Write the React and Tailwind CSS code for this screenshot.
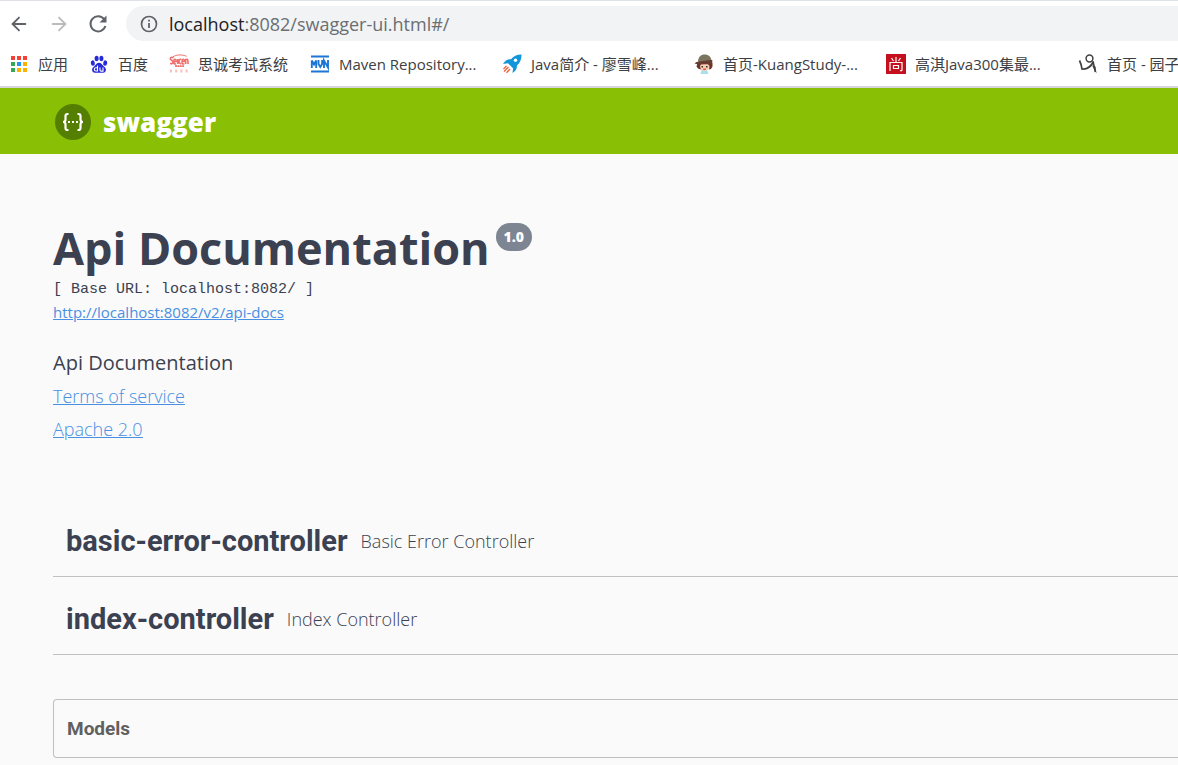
import { ArrowLeft, ArrowRight } from "lucide-react";

const AppsIcon = () => (
  <svg viewBox="0 0 18 18" className="h-[18px] w-[18px]">
    <path d="M1 1h4v4H1zM7 1h4v4H7zM13 1h4v4h-4z" fill="#f44336" />
    <path d="M1 7h4v4H1zM1 13h4v4H1z" fill="#34a853" />
    <path d="M7 7h4v4H7z" fill="#2196f3" />
    <path d="M13 7h4v4h-4zM7 13h4v4H7zM13 13h4v4h-4z" fill="#fbb300" />
  </svg>
);

const PawIcon = () => (
  <svg viewBox="0 0 20 20" className="h-5 w-5" fill="#2529d8">
    <ellipse cx="3.800" cy="9" rx="2" ry="2.700" transform="rotate(-12 4 9)" />
    <ellipse cx="7.600" cy="4.500" rx="2" ry="2.800" />
    <ellipse cx="12.400" cy="4.500" rx="2" ry="2.800" />
    <ellipse cx="16.200" cy="9" rx="2" ry="2.700" transform="rotate(12 16 9)" />
    <path d="M10 8.800c2.200 0 2.800 1.700 4.400 3.100 1.600 1.300 3 2.400 2.400 4.800-.5 2-2.600 2.300-6.800 2.100-4.200.2-6.300-.1-6.800-2.100-.6-2.400.8-3.500 2.400-4.800C7.200 10.500 7.800 8.800 10 8.800z" />
    <path
      d="M8.500 11.500v5.500H6.900a1.600 1.600 0 010-3.200h1.600M11 13.500v2.700q0 .9 1 .9h2v-3.600"
      fill="none"
      stroke="#fff"
      strokeWidth="1.100"
    />
  </svg>
);

const SiccenIcon = () => (
  <svg viewBox="0 0 20 20" className="h-5 w-5" fill="none" stroke="#f26f6b">
    <path d="M3.800 3C7 .5 13 .2 17.500 2.300" strokeWidth="1" />
    <path
      d="M4.500 4C2 2 0 4.800 2.300 6s2.700 4.200-1.300 3.500M4.800 7.500h2.400c0-3-2.400-3-2.400 0s1 2.800 2.400 2.200M8.800 5v5M12.200 5.500C9.500 4 9 10.500 12.200 9.500M13 7.500h2.400c0-3-2.400-3-2.400 0s1 2.800 2.400 2.200M16.700 10V5.500c2.500-1 2.300.5 2.300 4.500"
      strokeWidth="1.600"
    />
    <path d="M6 12.200h9" strokeWidth="1.800" strokeDasharray="2 .4" />
    <path d="M1 17h18" strokeWidth="3" strokeDasharray="2 3.200" opacity=".45" />
  </svg>
);

const MvnIcon = () => (
  <svg viewBox="0 0 20 20" className="h-5 w-5" fill="none" stroke="#1b76d8">
    <path d="M1 2.500h18M1 17.500h18" strokeWidth="2" />
    <path
      d="M1.800 14V6.500L4 10.500l2.200-4V14M8.500 6v4l1.800 3 1.800-3V6M14 14V6.500l4 7V6"
      strokeWidth="1.900"
    />
  </svg>
);

const RocketIcon = () => (
  <svg viewBox="0 0 20 20" className="h-5 w-5">
    <path
      d="M19.500.5c-5 0-8 1.500-10.500 4.800-3-.3-5.500.700-8 4.700l5-.8 5.200 5.200-.8 4.600c3.600-2 4.800-4.500 4.500-7.500C18 8.800 19.600 5.500 19.500.5z"
      fill="#1296db"
    />
    <circle cx="13.500" cy="6.300" r="1.700" fill="#fff" />
    <path
      d="M4.500 12L1.500 15M6.500 13L2 17.500M8 15l-3.500 3.800"
      stroke="#f0603c"
      strokeWidth="1.300"
    />
  </svg>
);

const BoyIcon = () => (
  <svg viewBox="0 0 20 20" className="h-5 w-5">
    <path d="M7.500 16h5.500l1.500 4H6.500z" fill="#a9dff2" />
    <ellipse cx="10.500" cy="12.500" rx="5.200" ry="4.500" fill="#f3cdb4" />
    <path
      d="M3.500 9l4 .5-1.500 2.500.8 3.500-2.800-1-1.500-2zM18.500 8.500v4l-1.500 2.500-2 .5.500-3.500-2-2.500z"
      fill="#6b3328"
    />
    <path d="M4 8.500C3.800 3 7 .5 10.500.5c4 0 7 2.500 7 7z" fill="#7b7460" />
    <path d="M.5 9.500C2.500 7 8 7.500 13 6.500s5-.5 5.500 0l-1 4C12 9.500 6 11.500.5 9.500z" fill="#663d30" />
    <path d="M7.500 12h1.500v1.500H7.500zM12 12h1.500v1.500H12z" fill="#402724" />
    <path d="M9.200 15.200h2.600" stroke="#d0453b" strokeWidth="1.300" />
  </svg>
);

const ShangIcon = () => (
  <svg viewBox="0 0 20 20" className="h-5 w-5">
    <path d="M0 0h20v20H0z" fill="#c4101d" />
    <path
      d="M10 3v5M5.500 4l2 3M14.500 4l-2 3M4 17V8.500h12V16q0 1-2 .7M7.500 11.500h5v3h-5z"
      fill="none"
      stroke="#fff"
      strokeWidth="1.200"
    />
  </svg>
);

const CnblogsIcon = () => (
  <svg viewBox="0 0 20 20" className="h-5 w-5" fill="none" stroke="#404040">
    <circle cx="11.500" cy="4.500" r="3.400" strokeWidth="1.500" />
    <path d="M15 7.500c.8 3 1.300 6 2.300 10.500" strokeWidth="1.600" />
    <path d="M1.500 6.500c1 2 2 5 2.500 8.500 4.500.5 9-2.500 11.500-7.500" strokeWidth="1.700" />
    <path d="M14 11.500l4.500 8-1-7z" fill="#404040" stroke="none" />
  </svg>
);

const bookmarks = [
  { title: "应用", icon: AppsIcon, width: "w-20" },
  { title: "百度", icon: PawIcon, width: "w-20" },
  { title: "思诚考试系统", icon: SiccenIcon, width: "w-[141px]" },
  { title: "Maven Repository...", icon: MvnIcon, width: "w-48" },
  { title: "Java简介 - 廖雪峰...", icon: RocketIcon, width: "w-48" },
  { title: "首页-KuangStudy-...", icon: BoyIcon, width: "w-48" },
  { title: "高淇Java300集最...", icon: ShangIcon, width: "w-48" },
  { title: "首页 - 园子", icon: CnblogsIcon, width: "w-48" },
];

const controllers = [
  { name: "basic-error-controller", description: "Basic Error Controller" },
  { name: "index-controller", description: "Index Controller" },
];

function AddressBar() {
  return (
    <div className="flex h-[45px] items-center pl-2">
      <button type="button" aria-label="Back" className="text-[#5f6368]">
        <ArrowLeft size={22} strokeWidth={2} />
      </button>
      <button type="button" aria-label="Forward" className="ml-[18px] text-[#babcbe]">
        <ArrowRight size={22} strokeWidth={2} />
      </button>
      <button type="button" aria-label="Reload" className="ml-[18px]">
        <svg viewBox="0 0 20 20" className="h-5 w-5">
          <path
            d="M16.200 5.200A7.600 7.600 0 1017.400 12"
            fill="none"
            stroke="#5f6368"
            strokeWidth="2"
          />
          <path d="M18.500 1.500v7h-7z" fill="#5f6368" />
        </svg>
      </button>
      <div className="ml-[18px] flex h-[35px] flex-1 items-center rounded-l-full bg-[#f1f3f4] pl-3.5">
        <svg viewBox="0 0 18 18" className="h-[18px] w-[18px] shrink-0">
          <circle cx="9" cy="9" r="7.500" fill="none" stroke="#5f6368" strokeWidth="1.700" />
          <path d="M8.100 4.800h1.800v1.800H8.100zM8.100 8h1.800v5H8.100z" fill="#5f6368" />
        </svg>
        <p className="ml-[11px] text-[18px] leading-6 text-[#6b6e72]">
          <span className="text-[#202124]">localhost</span>:8082/swagger-ui.html#/
        </p>
      </div>
    </div>
  );
}

function Bookmarks() {
  return (
    <nav className="flex h-10 items-center overflow-hidden pb-1 pl-[9px]">
      {bookmarks.map(({ title, icon: Icon, width }) => (
        <a
          key={title}
          href="#"
          className={`flex shrink-0 items-center gap-[9px] whitespace-nowrap text-[15px] leading-5 text-[#3c4043] ${width}`}
        >
          <span className="flex w-5 shrink-0 justify-center">
            <Icon />
          </span>
          {title}
        </a>
      ))}
    </nav>
  );
}

function Topbar() {
  return (
    <header className="flex h-[66px] items-center bg-[#89bf04] px-[53px] pt-0.5">
      <a href="#" className="flex items-center gap-[10px]">
        <svg viewBox="0 0 40 40" className="h-10 w-10">
          <circle cx="20" cy="20" r="18" fill="#547f00" />
          <path
            d="M15.500 12h-1q-2 0-2 2v3.500q0 2.500-2.500 2.500 2.500 0 2.500 2.500v3.500q0 2 2 2h1M24.500 12h1q2 0 2 2v3.500q0 2.500 2.500 2.500-2.500 0-2.500 2.500v3.500q0 2-2 2h-1"
            fill="none"
            stroke="#fff"
            strokeWidth="2.200"
          />
          <path d="M15 19h2v2h-2zM19 19h2v2h-2zM23 19h2v2h-2z" fill="#fff" />
        </svg>
        <span className="text-[26px] leading-10 font-extrabold text-white">swagger</span>
      </a>
    </header>
  );
}

export default function App() {
  return (
    <div className="min-h-screen overflow-hidden bg-[#fafafa] font-['Open_Sans','Noto_Sans_CJK_SC',sans-serif] text-[#3b4151]">
      <div className="border-t border-b-2 border-t-[#dee1e6] border-b-[#d5d7da] bg-white">
        <AddressBar />
        <Bookmarks />
      </div>
      <Topbar />
      <main className="pb-2 pl-[53px]">
        <section className="pt-[65px]">
          <h1 className="flex items-start gap-1.5 text-[45px] leading-[58px] font-bold">
            Api Documentation
            <span className="mt-1 rounded-full bg-[#7d8492] px-2 text-sm leading-7 font-extrabold text-white">
              1.0
            </span>
          </h1>
          <p className="font-['Liberation_Mono',monospace] text-[15px] leading-[26px]">
            [ Base URL: localhost:8082/ ]
          </p>
          <a href="#" className="block text-[15px] leading-[18px] text-[#4990e2] underline">
            http://localhost:8082/v2/api-docs
          </a>
          <p className="mt-7 text-[20px] leading-7">Api Documentation</p>
          <div className="mt-[3px] flex flex-col items-start text-[18px] leading-[33px] font-[350] text-[#4990e2] underline">
            <a href="#">Terms of service</a>
            <a href="#">Apache 2.0</a>
          </div>
        </section>
        <section className="mt-[53px]">
          {controllers.map(({ name, description }) => (
            <h2
              key={name}
              className="flex h-[78px] items-center gap-[13px] border-b border-[#bfc1c5] pt-2 pl-[13px]"
            >
              <span className="font-[Roboto,sans-serif] text-[29px] font-bold">{name}</span>
              <span className="text-[18px] font-[350]">{description}</span>
            </h2>
          ))}
        </section>
        <section className="mt-11 rounded-l border border-r-0 border-[#bfbfc0] px-[13px]">
          <h3 className="font-[Roboto,sans-serif] text-[19px] leading-[57px] font-bold text-[#606060]">
            Models
          </h3>
        </section>
      </main>
    </div>
  );
}
